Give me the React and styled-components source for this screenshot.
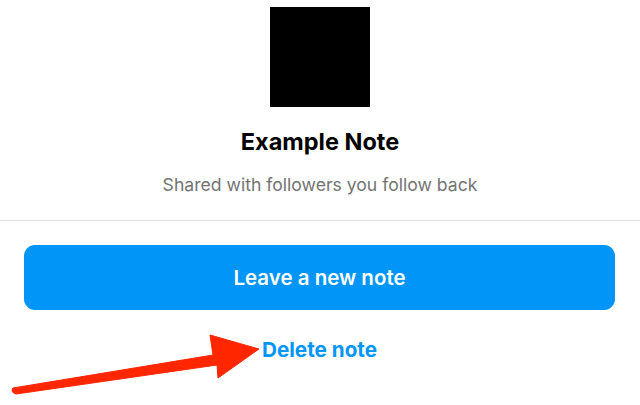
import React from "react";
import styled, { createGlobalStyle } from "styled-components";

const Global = createGlobalStyle`
  html, body {
    margin: 0;
    background: #fff;
    font-family: Inter, "Noto Sans", "Liberation Sans", sans-serif;
  }
`;

const Page = styled.div`
  position: relative;
  width: 640px;
  height: 405px;
  overflow: hidden;
  background: #fff;
`;

const Header = styled.section`
  display: flex;
  flex-direction: column;
  align-items: center;
  padding-top: 7px;
  height: 221px;
  box-sizing: border-box;
  border-bottom: 1px solid #e3e3e3;
`;

const Thumb = styled.div`
  width: 100px;
  height: 100px;
  background: #000;
`;

const Title = styled.h1`
  margin: 22px 0 0;
  font-size: 23.5px;
  line-height: 26px;
  font-weight: 700;
  color: #000;
`;

const Subtitle = styled.p`
  margin: 20px 0 0;
  font-size: 17.6px;
  line-height: 20px;
  color: #737373;
`;

const Actions = styled.div`
  display: flex;
  flex-direction: column;
  align-items: center;
  padding: 24px 25px 0 24px;
`;

const PrimaryButton = styled.button`
  width: 100%;
  height: 65px;
  border: none;
  border-radius: 11px;
  background: #0095f6;
  color: #fff;
  font-family: inherit;
  font-size: 20.5px;
  font-weight: 600;
  cursor: pointer;
`;

const LinkButton = styled.button`
  margin-top: 27px;
  padding: 0;
  border: none;
  background: transparent;
  color: #0095f6;
  font-family: inherit;
  font-size: 20.7px;
  font-weight: 700;
  cursor: pointer;
`;

const Arrow = styled.svg`
  position: absolute;
  left: 0;
  top: 320px;
  pointer-events: none;
`;

export default function App() {
  return (
    <Page>
      <Global />
      <Header>
        <Thumb />
        <Title>Example Note</Title>
        <Subtitle>Shared with followers you follow back</Subtitle>
      </Header>
      <Actions>
        <PrimaryButton>Leave a new note</PrimaryButton>
        <LinkButton>Delete note</LinkButton>
      </Actions>
      <Arrow width="280" height="85" viewBox="0 0 280 85">
        <path
          d="M13 68 L213 35 L210 15 L259 29 L218 58 L217 45 L16 74 Q10 72 13 68 Z"
          fill="#ff2600"
          stroke="#ff2600"
          strokeWidth="1"
          strokeLinejoin="round"
        />
      </Arrow>
    </Page>
  );
}
